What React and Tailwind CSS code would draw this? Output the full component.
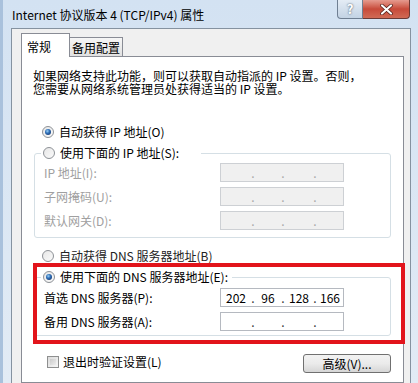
function Radio({ checked, id }) {
  return (
    <svg width="12" height="12" viewBox="0 0 12 12" className="shrink-0">
      <defs>
        <linearGradient id={`rb-${id}`} x1="0" y1="0" x2="1" y2="1">
          <stop offset="0" stopColor="#e6e6e6" />
          <stop offset="1" stopColor="#fbfbfb" />
        </linearGradient>
        <radialGradient id={`rd-${id}`} cx="0.4" cy="0.35" r="0.7">
          <stop offset="0" stopColor="#9ad0f5" />
          <stop offset="0.5" stopColor="#2f6fb8" />
          <stop offset="1" stopColor="#1b3f78" />
        </radialGradient>
      </defs>
      <circle cx="6" cy="6" r="5.5" fill={`url(#rb-${id})`} stroke="#8d9196" />
      {checked && <circle cx="6" cy="6" r="3" fill={`url(#rd-${id})`} />}
    </svg>
  );
}

function IpField({ values, disabled }) {
  const widths = ["w-[30px]", "w-[26px]", "w-[28px]", "w-[26px]"];
  const dot = disabled ? "text-[#a8a8a8]" : "text-[#333]";
  return (
    <div
      className={`w-[124px] h-[19px] border flex items-center leading-[17px] ${
        disabled ? "bg-[#f0f0f0] border-[#cdd0d4]" : "bg-white border-[#b5b9c0]"
      }`}
    >
      {widths.map((w, i) => (
        <div key={i} className="flex items-center">
          <span className={`${w} text-center`}>{values ? values[i] : ""}</span>
          {i < 3 && <span className={`w-[4px] text-center ${dot}`}>.</span>}
        </div>
      ))}
    </div>
  );
}

function FieldRow({ label, values, disabled }) {
  return (
    <div className="flex items-center">
      <span className={`w-[176px] leading-[14px] ${disabled ? "text-[#a0a0a0]" : "text-black"}`}>{label}</span>
      <IpField values={values} disabled={disabled} />
    </div>
  );
}

export default function App() {
  return (
    <div className="relative w-[418px] h-[383px] overflow-hidden flex flex-col bg-gradient-to-b from-[#d3e2f2] to-[#e2ebf5] border-l-[3px] border-[#a9c1dc] font-['Noto_Sans_CJK_SC',sans-serif] text-[12px] text-black">
      <div className="h-[28px] shrink-0 flex items-start pl-[9px] pr-[8px]">
        <span className="mt-[7px] leading-[16px]">Internet 协议版本 4 (TCP/IPv4) 属性</span>
        <div className="ml-auto flex">
          <div className="w-[26px] h-[19px] border border-t-0 border-[#6f7f92] rounded-bl-[4px] bg-gradient-to-b from-[#e4ecf5] to-[#c3d3e4] flex items-center justify-center text-[13px] font-bold text-white [text-shadow:0_0_2px_#304050]">
            ?
          </div>
          <div className="w-[47px] h-[19px] border border-t-0 border-l-0 border-[#6b3a36] rounded-br-[4px] bg-gradient-to-b from-[#e59b8f] via-[#c74a3a] to-[#d06a55] flex items-center justify-center">
            <svg width="13" height="11" viewBox="0 0 13 11">
              <path d="M2 1.5 L11 9.5 M11 1.5 L2 9.5" stroke="#4a1a14" strokeWidth="3.6" strokeLinecap="round" />
              <path d="M2 1.5 L11 9.5 M11 1.5 L2 9.5" stroke="#ffffff" strokeWidth="2.2" strokeLinecap="round" />
            </svg>
          </div>
        </div>
      </div>

      <div className="flex-1 ml-[8px] mr-[7px] border border-b-0 border-[#8592a0] bg-[#f0f0f0] pl-[9px] pr-[6px] pt-[4px] flex flex-col">
        <div className="flex items-end h-[23px] shrink-0">
          <div className="relative z-10 w-[49px] h-[24px] -mb-px border border-b-0 border-[#898c95] bg-white pl-[5px] pt-[6px] leading-[14px]">
            常规
          </div>
          <div className="w-[53px] h-[19px] border border-l-0 border-b-0 border-[#898c95] bg-gradient-to-b from-[#f6f6f6] to-[#e1e1e1] pl-[2px] pt-[3px] leading-[14px]">
            备用配置
          </div>
        </div>

        <div className="flex-1 border border-[#898c95] bg-white flex flex-col">
          <p className="mt-[12px] ml-[11px] leading-[13px]">
            如果网络支持此功能，则可以获取自动指派的 IP 设置。否则，
            <br />
            您需要从网络系统管理员处获得适当的 IP 设置。
          </p>

          <div className="mt-[30px] ml-[20px] h-[14px] flex items-center gap-[5px]">
            <Radio checked id="a" />
            <span className="leading-[14px]">自动获得 IP 地址(O)</span>
          </div>

          <div className="mt-[14px] mx-[12px] border border-[#d5dfe5] rounded-[3px] pl-[9px] pb-[7px] flex flex-col gap-[5px]">
            <div className="-mt-[8px] ml-[-3px] w-fit bg-white pl-[2px] pr-[22px] flex items-center gap-[5px] h-[14px]">
              <Radio id="b" />
              <span className="leading-[14px]">使用下面的 IP 地址(S):</span>
            </div>
            <div className="mt-[-2px]">
              <FieldRow label="IP 地址(I):" disabled />
            </div>
            <FieldRow label="子网掩码(U):" disabled />
            <FieldRow label="默认网关(D):" disabled />
          </div>

          <div className="mt-[11px] ml-[20px] h-[14px] flex items-center gap-[5px]">
            <Radio id="c" />
            <span className="leading-[14px] text-[#222]">自动获得 DNS 服务器地址(B)</span>
          </div>

          <div className="mt-[14px] mx-[12px] border border-[#d5dfe5] rounded-[3px] pl-[9px] pb-[4px] flex flex-col gap-[5px]">
            <div className="-mt-[8px] ml-[-3px] w-fit bg-white pl-[2px] pr-[4px] flex items-center gap-[5px] h-[14px]">
              <Radio checked id="d" />
              <span className="leading-[14px]">使用下面的 DNS 服务器地址(E):</span>
            </div>
            <div className="mt-[-1px]">
              <FieldRow label="首选 DNS 服务器(P):" values={["202", "96", "128", "166"]} />
            </div>
            <FieldRow label="备用 DNS 服务器(A):" />
          </div>

          <div className="mt-[18px] ml-[25px] mr-[12px] flex items-start">
            <div className="mt-[1px] flex items-center gap-[4px]">
              <span className="w-[12px] h-[12px] border border-[#8e8f8f] bg-gradient-to-br from-[#dcdcdc] to-[#f6f6f6] p-[2px]">
                <span className="block w-full h-full bg-gradient-to-br from-[#cbcbcb] to-[#ececec]" />
              </span>
              <span className="leading-[14px]">退出时验证设置(L)</span>
            </div>
            <div className="ml-auto w-[88px] h-[19px] border border-[#707070] rounded-[3px] bg-gradient-to-b from-[#f2f2f2] via-[#ebebeb] to-[#d6d6d6] flex items-center justify-center leading-[14px]">
              高级(V)...
            </div>
          </div>
        </div>
      </div>

      <div className="absolute left-[30px] top-[263px] w-[372px] h-[81px] border-[4px] border-[#e2141b]" />
    </div>
  );
}
